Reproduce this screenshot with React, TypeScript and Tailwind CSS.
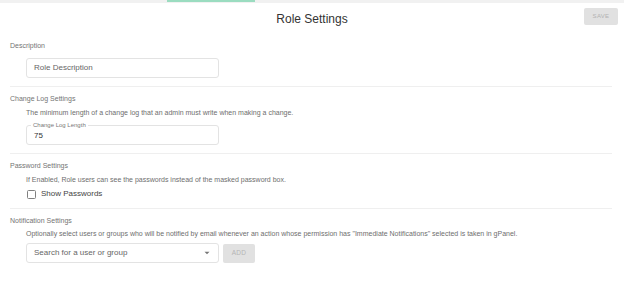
import type { ReactNode } from "react";

function Section({
  label,
  desc,
  children,
  divider = true,
  top = "mt-[5px]",
  descTop = "mt-[4px]",
}: {
  label: string;
  desc?: string;
  children: ReactNode;
  divider?: boolean;
  top?: string;
  descTop?: string;
}) {
  return (
    <section className={`${top} ${divider ? "border-b border-[#efefef]" : ""}`}>
      <div className="text-[7px] leading-[10px] text-[#747474]">{label}</div>
      {desc && (
        <p className={`ml-[16px] ${descTop} text-[7px] leading-[10px] text-[#6e6e6e]`}>{desc}</p>
      )}
      {children}
    </section>
  );
}

function Box({ children, className = "" }: { children: ReactNode; className?: string }) {
  return (
    <div
      className={`ml-[16px] flex h-[20px] w-[193px] items-center rounded-[3px] border border-[#e3e3e3] bg-white px-[7px] ${className}`}
    >
      {children}
    </div>
  );
}

export default function App() {
  return (
    <div className="h-[286px] w-[624px] overflow-hidden bg-white font-['Liberation_Sans',Arial,sans-serif]">
      <div className="h-[3px] bg-[#f1f1f1]">
        <div className="ml-[167px] h-[1.5px] w-[88px] bg-[#9bdcc0]" />
      </div>

      <header className="grid h-[32px] grid-cols-[1fr_auto_1fr] items-start">
        <div />
        <h1 className="mt-[9px] text-[12px] leading-[14px] text-[#333]">Role Settings</h1>
        <div className="flex justify-end pr-[6px]">
          <button className="mt-[5px] h-[17px] w-[34px] rounded-[2px] bg-[#e1e1e1] text-[6px] tracking-[0.3px] text-[#b2b2b2]">
            SAVE
          </button>
        </div>
      </header>

      <div className="pl-[10px] pr-[12px]">
        <Section label="Description" top="mt-[6px]">
          <Box className="mt-[7px] mb-[8px]">
            <span className="text-[8px] text-[#666]">Role Description</span>
          </Box>
        </Section>

        <Section
          label="Change Log Settings"
          desc="The minimum length of a change log that an admin must write when making a change."
          top="mt-[7px]"
        >
          <Box className="relative mt-[7px] mb-[8px] pt-[2px]">
            <span className="absolute -top-[4px] left-[4px] bg-white px-[2px] text-[6px] leading-[7px] text-[#777]">
              Change Log Length
            </span>
            <span className="text-[8px] text-[#333]">75</span>
          </Box>
        </Section>

        <Section
          label="Password Settings"
          desc="If Enabled, Role users can see the passwords instead of the masked password box."
          top="mt-[7px]"
        >
          <label className="ml-[17px] mt-[3px] mb-[8px] flex h-[12px] items-center gap-[5px]">
            <span className="h-[9px] w-[9px] rounded-[1.5px] border border-[#808080] bg-white" />
            <span className="text-[8px] text-[#444]">Show Passwords</span>
          </label>
        </Section>

        <Section
          label="Notification Settings"
          desc={'Optionally select users or groups who will be notified by email whenever an action whose permission has "Immediate Notifications" selected is taken in gPanel.'}
          top="mt-[7px]"
          descTop="mt-[3px]"
          divider={false}
        >
          <div className="mt-[4px] flex items-center gap-[4px]">
            <Box className="h-[19px] justify-between">
              <span className="text-[8px] text-[#666]">Search for a user or group</span>
              <svg width="6" height="4" viewBox="0 0 6 4" className="mr-[1px]">
                <path d="M0.5 0.8 L5.5 0.8 L3 3.3 Z" fill="#777" />
              </svg>
            </Box>
            <button className="h-[19px] w-[32px] rounded-[2px] bg-[#e1e1e1] text-[6.5px] tracking-[0.3px] text-[#b5b5b5]">
              ADD
            </button>
          </div>
        </Section>
      </div>
    </div>
  );
}
